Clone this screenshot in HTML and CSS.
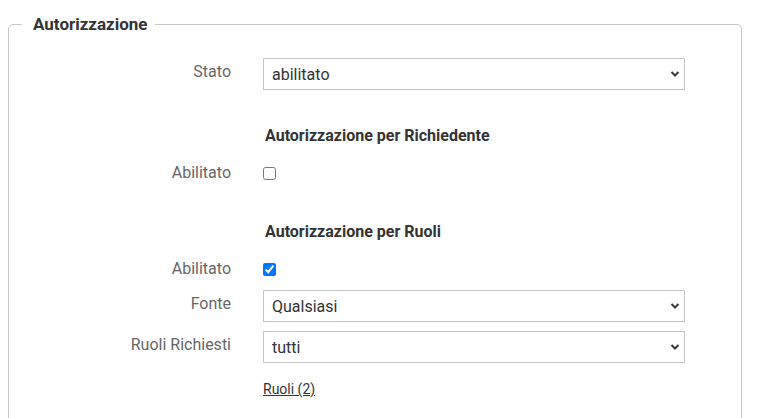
FILE: index.html
```html
<!DOCTYPE html>
<html lang="it">
<head>
<meta charset="utf-8">
<title>Autorizzazione</title>
<link rel="stylesheet" href="styles.css">
</head>
<body>
<div class="page">
  <fieldset class="box">
    <legend class="box-title">Autorizzazione</legend>

    <div class="row row-select row-first">
      <label class="lbl" for="stato">Stato</label>
      <select id="stato" class="sel"><option>abilitato</option></select>
    </div>

    <div class="row row-heading">
      <span></span>
      <h3 class="subtitle">Autorizzazione per Richiedente</h3>
    </div>

    <div class="row row-check">
      <label class="lbl" for="ab1">Abilitato</label>
      <span><input id="ab1" class="chk" type="checkbox"></span>
    </div>

    <div class="row row-heading row-heading2">
      <span></span>
      <h3 class="subtitle">Autorizzazione per Ruoli</h3>
    </div>

    <div class="row row-check">
      <label class="lbl" for="ab2">Abilitato</label>
      <span><input id="ab2" class="chk" type="checkbox" checked></span>
    </div>

    <div class="row row-select row-fonte">
      <label class="lbl" for="fonte">Fonte</label>
      <select id="fonte" class="sel"><option>Qualsiasi</option></select>
    </div>

    <div class="row row-select row-ruoli">
      <label class="lbl" for="ruoli">Ruoli Richiesti</label>
      <select id="ruoli" class="sel"><option>tutti</option></select>
    </div>

    <div class="row row-link">
      <span></span>
      <a class="link" href="#">Ruoli (2)</a>
    </div>
  </fieldset>
</div>
</body>
</html>
```

FILE: styles.css
```css
html, body {
  margin: 0;
  padding: 0;
  background: #fff;
  font-family: Roboto, "Liberation Sans", sans-serif;
  color: #333;
}

.page {
  padding: 14px 17px 0 8px;
}

.box {
  margin: 0;
  padding: 0 0 40px 0;
  border: 1px solid #c8c8c8;
  border-radius: 5px;
  min-width: 0;
}

.box-title {
  margin-left: 13px;
  padding: 0 7px 0 11px;
  font-size: 17px;
  font-weight: 700;
  line-height: 20px;
  color: #333;
}

.row {
  display: grid;
  grid-template-columns: 222px 422px;
  column-gap: 32px;
}

.row-first { margin-top: 24px; }

.row-select { align-items: start; }

.lbl {
  text-align: right;
  font-size: 16px;
  line-height: 20px;
  color: #666;
}

.row-select .lbl { padding-top: 4px; }

.sel {
  -webkit-appearance: none;
  appearance: none;
  height: 32px;
  width: 422px;
  box-sizing: border-box;
  margin: 0;
  padding: 0 28px 0 8px;
  border: 1px solid #c4c4c4;
  border-radius: 0;
  background-color: #fff;
  background-image: url("data:image/svg+xml;utf8,<svg xmlns='http://www.w3.org/2000/svg' width='10' height='8' viewBox='0 0 10 8'><path d='M1.5 2 L5 5.5 L8.5 2' fill='none' stroke='%23343a40' stroke-width='2'/></svg>");
  background-repeat: no-repeat;
  background-position: right 4px center;
  font-family: Roboto, "Liberation Sans", sans-serif;
  font-size: 16px;
  color: #333;
}

.row-heading { margin-top: 36px; }
.row-heading2 { margin-top: 39px; }

.subtitle {
  margin: 0;
  padding-left: 2px;
  font-size: 16px;
  font-weight: 700;
  line-height: 20px;
  color: #333;
}

.row-check {
  margin-top: 17px;
  align-items: center;
  height: 20px;
}

.row-check > span { display: flex; align-items: center; }

.chk {
  margin: 0;
  width: 13px;
  height: 13px;
}

.row-fonte { margin-top: 11px; }
.row-ruoli { margin-top: 9px; }

.row-link { margin-top: 16px; }

.link {
  font-size: 14px;
  line-height: 20px;
  color: #333;
  text-decoration: underline;
}
```
